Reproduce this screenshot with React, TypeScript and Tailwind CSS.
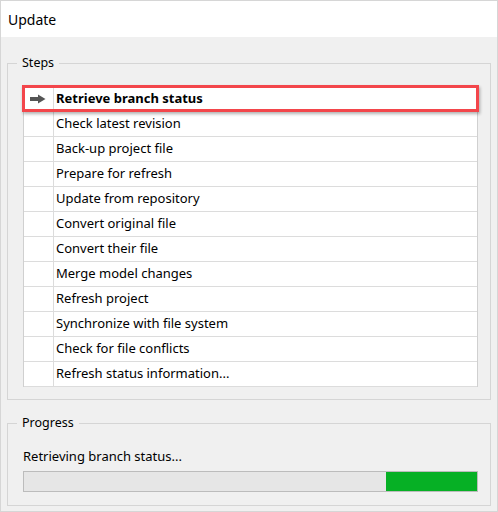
import React from "react"

const steps = [
  "Retrieve branch status",
  "Check latest revision",
  "Back-up project file",
  "Prepare for refresh",
  "Update from repository",
  "Convert original file",
  "Convert their file",
  "Merge model changes",
  "Refresh project",
  "Synchronize with file system",
  "Check for file conflicts",
  "Refresh status information...",
]

function Arrow() {
  return (
    <svg width="16" height="10" viewBox="0 0 16 10">
      <rect x="0" y="3" width="9" height="4" fill="#555555" />
      <path d="M8 0.5 L15.5 5 L8 9.5 Z" fill="#555555" />
    </svg>
  )
}

export default function App() {
  return (
    <div
      className="w-[498px] h-[512px] border border-[#d6d6d6] bg-[#f0f0f0] text-black flex flex-col"
      style={{ fontFamily: '"Segoe UI", "Noto Sans", sans-serif' }}
    >
      <div className="h-[36px] bg-white flex items-center pl-[7px] text-[14px]">Update</div>

      <div className="px-[6px] flex flex-col">
        <fieldset className="mt-[18px] border border-[#d5d5d5] pl-[15px] pb-[12px]">
          <legend className="ml-[-6px] px-[5px] text-[12.5px] leading-[16px]">Steps</legend>
          <div className="relative mt-[15px] w-[455px] border-t border-l border-r border-[#d0d0d0] bg-white text-[13px]">
            {steps.map((s, i) => (
              <div key={s} className="flex h-[25px] border-b border-[#dcdcdc]">
                <div className="w-[30px] shrink-0 border-r border-[#dcdcdc] flex items-center pl-[6px]">
                  {i === 0 && <Arrow />}
                </div>
                <div className={"flex items-center pl-[2px] " + (i === 0 ? "font-bold" : "")}>{s}</div>
              </div>
            ))}
            <div className="absolute left-[-2px] top-[-2px] w-[457px] h-[27px] border-[3px] border-[#f3464b] shadow-[1px_2px_3px_rgba(0,0,0,0.3)]" />
          </div>
        </fieldset>

        <fieldset className="mt-[15px] border border-[#d5d5d5] pl-[15px] pb-[13px]">
          <legend className="ml-[-6px] px-[5px] text-[12.5px] leading-[16px]">Progress</legend>
          <div className="mt-[17px] text-[13px] leading-[16px]">Retrieving branch status...</div>
          <div className="mt-[7px] w-[455px] h-[21px] border border-[#bcbcbc] bg-[#e6e6e6] flex justify-end">
            <div className="w-[91px] h-full bg-[#06b025]" />
          </div>
        </fieldset>
      </div>
    </div>
  )
}
